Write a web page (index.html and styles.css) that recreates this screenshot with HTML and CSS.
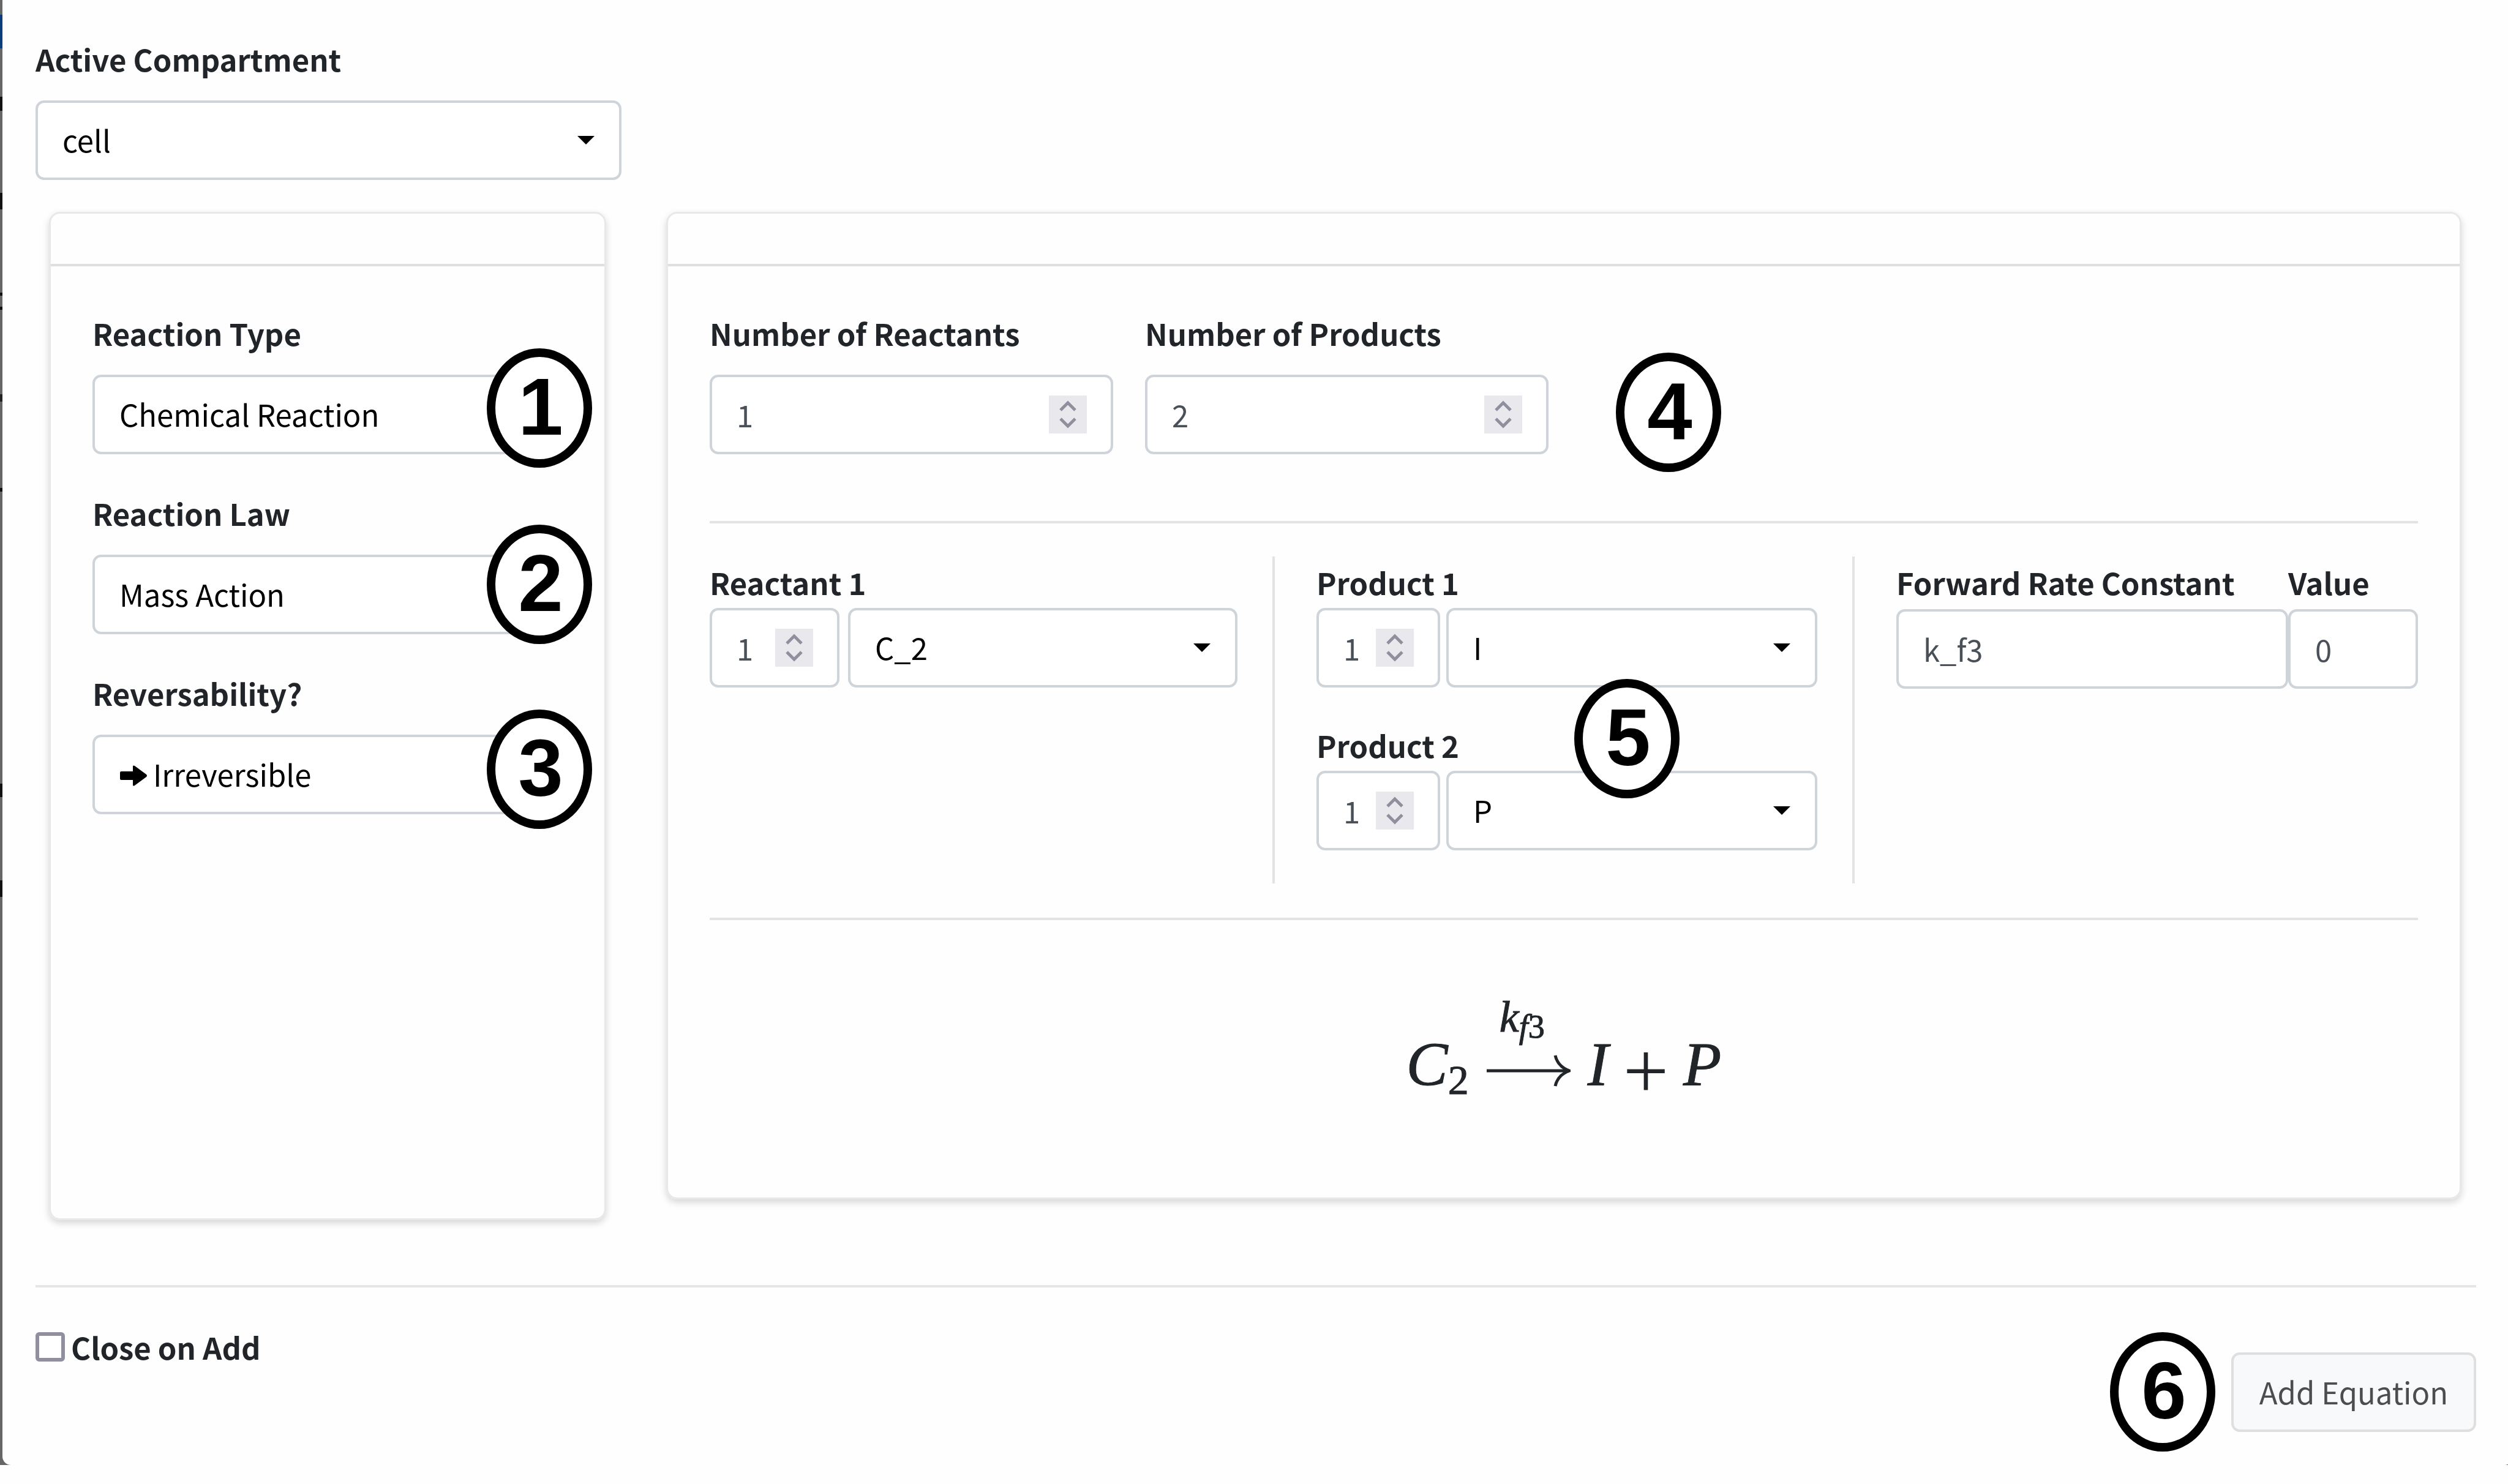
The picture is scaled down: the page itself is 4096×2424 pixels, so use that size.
FILE: index.html
```html
<!DOCTYPE html>
<html lang="en">
<head>
    <meta charset="UTF-8">
    <meta name="viewport" content="width=device-width, initial-scale=1.0">
    <title>Add Equation</title>
    <link rel="stylesheet" href="styles.css">
</head>
<body>
    <div class="backdrop">
    <form class="modal">
        <div class="compartment field">
            <label for="compartment">Active Compartment</label>
            <select id="compartment"><option>cell</option></select>
        </div>

        <div class="cards">
            <section class="card card-options">
                <div class="card-header"></div>
                <div class="card-body">
                    <div class="field">
                        <label for="reactionType">Reaction Type</label>
                        <select id="reactionType"><option>Chemical Reaction</option></select>
                        <span class="marker marker-1">1</span>
                    </div>
                    <div class="field">
                        <label for="reactionLaw">Reaction Law</label>
                        <select id="reactionLaw"><option>Mass Action</option></select>
                        <span class="marker marker-2">2</span>
                    </div>
                    <div class="field">
                        <label for="reversability">Reversability?</label>
                        <div class="icon-select">
                            <svg class="arrow-icon" viewBox="0 0 46 34"><path d="M3 10h19V1q1-1 3 0l19 14q2 2 0 4L25 33q-2 1-3 0v-9H3q-2 0-2-2V12q0-2 2-2z"/></svg>
                            <select id="reversability"><option>Irreversible</option></select>
                        </div>
                        <span class="marker marker-3">3</span>
                    </div>
                </div>
            </section>

            <section class="card card-equation">
                <div class="card-header"></div>
                <div class="card-body">
                    <div class="counts">
                        <div class="field">
                            <label for="numReactants">Number of Reactants</label>
                            <div class="number">
                                <input type="number" id="numReactants" value="1">
                                <svg class="spin" viewBox="0 0 62 62"><path d="M19 24l12-12 12 12M19 38l12 12 12-12"/></svg>
                            </div>
                        </div>
                        <div class="field">
                            <label for="numProducts">Number of Products</label>
                            <div class="number">
                                <input type="number" id="numProducts" value="2">
                                <svg class="spin" viewBox="0 0 62 62"><path d="M19 24l12-12 12 12M19 38l12 12 12-12"/></svg>
                            </div>
                        </div>
                        <span class="marker marker-4">4</span>
                    </div>

                    <hr>

                    <div class="species">
                        <div class="column reactants">
                            <div class="row">
                                <label for="reactant1">Reactant 1</label>
                                <div class="pair">
                                    <div class="number">
                                        <input type="number" aria-label="Reactant 1 coefficient" value="1">
                                        <svg class="spin" viewBox="0 0 62 62"><path d="M19 24l12-12 12 12M19 38l12 12 12-12"/></svg>
                                    </div>
                                    <select id="reactant1"><option>C_2</option></select>
                                </div>
                            </div>
                        </div>
                        <div class="column products">
                            <div class="row">
                                <label for="product1">Product 1</label>
                                <div class="pair">
                                    <div class="number">
                                        <input type="number" aria-label="Product 1 coefficient" value="1">
                                        <svg class="spin" viewBox="0 0 62 62"><path d="M19 24l12-12 12 12M19 38l12 12 12-12"/></svg>
                                    </div>
                                    <select id="product1"><option>I</option></select>
                                </div>
                            </div>
                            <div class="row">
                                <label for="product2">Product 2</label>
                                <div class="pair">
                                    <div class="number">
                                        <input type="number" aria-label="Product 2 coefficient" value="1">
                                        <svg class="spin" viewBox="0 0 62 62"><path d="M19 24l12-12 12 12M19 38l12 12 12-12"/></svg>
                                    </div>
                                    <select id="product2"><option>P</option></select>
                                </div>
                            </div>
                            <span class="marker marker-5">5</span>
                        </div>
                        <div class="column rates">
                            <div class="rate-name">
                                <label for="rateConstant">Forward Rate Constant</label>
                                <input type="text" id="rateConstant" value="k_f3">
                            </div>
                            <div class="rate-value">
                                <label for="rateValue">Value</label>
                                <input type="text" id="rateValue" value="0">
                            </div>
                        </div>
                    </div>

                    <hr>

                    <div class="equation">
                        <span class="term"><i>C</i><sub>2</sub></span>
                        <span class="reaction">
                            <span class="rate"><i>k</i><sub><i>f</i>3</sub></span>
                            <svg class="long-arrow" viewBox="0 0 138 54"><path d="M1 27h134M113 2q4 18 23 25q-19 7-23 25"/></svg>
                        </span>
                        <span class="term"><i>I</i><span class="plus">+</span><i>P</i></span>
                    </div>
                </div>
            </section>
        </div>

        <div class="footer">
            <div class="close-on-add">
                <input type="checkbox" id="closeOnAdd">
                <label for="closeOnAdd">Close on Add</label>
            </div>
            <div class="actions">
                <span class="marker marker-6">6</span>
                <button type="button">Add Equation</button>
            </div>
        </div>
    </form>
    </div>
</body>
</html>
```
FILE: styles.css
```css
* {
    box-sizing: border-box;
}
body {
    margin: 0;
    background: #fefefe;
    color: #212529;
    font-family: 'Noto Sans CJK SC', 'Open Sans', sans-serif;
    font-size: 49px;
    line-height: 84px;
}
/* dimmed page showing past the dialog's edge */
.backdrop {
    overflow: hidden;
    padding-left: 4px;
    background: #666 linear-gradient(
        #666 24px, #0b3c7c 24px 79px, #666 79px 158px,
        #111 158px 181px, #666 181px 315px, #111 315px 342px,
        #666 342px 478px, #111 478px 483px, #666 483px 501px,
        #111 501px 506px, #666 506px 644px, #222 644px 656px,
        #666 656px 797px, #111 797px 803px, #666 803px 1280px,
        #111 1280px 1302px, #666 1302px 1438px, #111 1438px 1465px,
        #666 1465px);
}
.modal {
    margin-right: -8px;
    border-radius: 0 0 14px 14px;
    padding: 54px 60px 54px 54px;
    background: #fefefe;
}
label {
    display: block;
    font-weight: 700;
}
select, input, button {
    width: 100%;
    height: 130px;
    padding: 0 40px 2px;
    border: 4px solid #ced4da;
    border-radius: 14px;
    background: #fff;
    font: inherit;
    appearance: none;
}
select {
    color: #000;
    background: #fff url("data:image/svg+xml,%3Csvg xmlns='http://www.w3.org/2000/svg' viewBox='0 0 28 14'%3E%3Cpath d='M0 0h28L14 14z'/%3E%3C/svg%3E") no-repeat right 40px center / 28px 14px;
}
input {
    color: #495057;
}
input[type=number] {
    appearance: textfield;
}
input::-webkit-inner-spin-button {
    display: none;
}
.field {
    position: relative;
}
.field label {
    margin-bottom: 26px;
}
.compartment {
    width: 957px;
}
.cards {
    display: flex;
    align-items: flex-start;
    justify-content: space-between;
    margin: 52px 24px 0 22px;
}
.card {
    border: 3px solid #e8e8e8;
    border-radius: 18px;
    box-shadow: 0 5px 12px rgba(0, 0, 0, 0.16);
}
.card-header {
    height: 86px;
    border-bottom: 4px solid #dfdfdf;
}
.card-body {
    padding: 67px 68px;
}
.card-options {
    width: 910px;
    min-height: 1647px;
}
.card-options .field {
    margin-bottom: 54px;
}
.card-equation {
    width: 2932px;
    min-height: 1613px;
}
.icon-select {
    position: relative;
}
.icon-select select {
    padding-left: 95px;
}
.arrow-icon {
    position: absolute;
    left: 44px;
    top: 50px;
    width: 46px;
    height: 34px;
}
.number {
    position: relative;
}
.spin {
    position: absolute;
    right: 43px;
    top: 34px;
    width: 62px;
    height: 62px;
    background: #e9e9ed;
    fill: none;
    stroke: #8f8f9d;
    stroke-width: 5;
}
.counts {
    display: flex;
    gap: 52px;
    position: relative;
    margin-bottom: 109px;
}
.counts .field {
    width: 659px;
}
hr {
    margin: 0;
    border: 0;
    border-top: 4px solid #e3e3e3;
}
.species {
    display: flex;
    margin: 54px 0 56px;
    min-height: 534px;
}
.column + .column {
    border-left: 4px solid #e3e3e3;
    padding-left: 68px;
}
.reactants {
    width: 919px;
    padding-right: 57px;
}
.products {
    position: relative;
    width: 947px;
    padding-right: 57px;
}
.row {
    margin-bottom: 52px;
}
.pair {
    display: flex;
    gap: 14px;
}
.pair .number {
    flex: none;
    width: 212px;
}
.products .pair {
    gap: 10px;
}
.products .number {
    width: 202px;
}
.rates {
    display: flex;
    flex: 1;
}
.rate-name {
    flex: 1;
}
.rate-value {
    width: 212px;
}
.rates label {
    margin-bottom: 2px;
}
.equation {
    display: flex;
    justify-content: center;
    align-items: baseline;
    margin-top: 186px;
    font-family: 'Liberation Serif', serif;
    font-size: 102px;
    line-height: 100px;
    -webkit-text-stroke: 1px #212529;
}
.equation sub {
    font-size: 68px;
    line-height: 0;
    vertical-align: -14px;
}
.reaction {
    position: relative;
    width: 138px;
    margin: 0 28px;
}
.rate {
    position: absolute;
    left: 22px;
    bottom: 78px;
    font-size: 72px;
    white-space: nowrap;
}
.rate sub {
    font-size: 54px;
    vertical-align: -10px;
}
.long-arrow {
    width: 138px;
    height: 54px;
    fill: none;
    stroke: #212529;
    stroke-width: 5;
    vertical-align: -3px;
}
.plus {
    margin: 0 24px;
    font-size: 132px;
    line-height: 0;
    vertical-align: -20px;
    -webkit-text-stroke: 0;
}
.footer {
    display: flex;
    justify-content: space-between;
    margin-top: 106px;
    padding-top: 54px;
    border-top: 4px solid #e6e6e6;
}
.close-on-add {
    display: flex;
    gap: 10px;
    height: 86px;
    align-items: center;
}
.close-on-add input {
    width: 48px;
    height: 48px;
    margin: 0;
    padding: 0;
    border: 6px solid #8f8f9d;
    border-radius: 6px;
}
.actions {
    position: relative;
    margin-top: 52px;
}
button {
    width: 400px;
    border-color: #dfdfdf;
    background: #f8f9fa;
    color: #4d4d4d;
    white-space: nowrap;
}
.marker {
    position: absolute;
    width: 172px;
    height: 195px;
    padding-left: 4px;
    border: 14px solid #000;
    border-radius: 50%;
    background: #fff;
    color: #000;
    font: bold 132px/164px 'Liberation Sans', sans-serif;
    text-align: center;
}
.marker-1 {
    right: -48px;
    top: 67px;
}
.marker-2 {
    right: -48px;
    top: 61px;
}
.marker-3 {
    right: -48px;
    top: 69px;
}
.marker-4 {
    left: 1480px;
    top: 74px;
}
.marker-5 {
    left: 489px;
    top: 200px;
}
.marker-6 {
    right: 426px;
    top: -33px;
}
```
